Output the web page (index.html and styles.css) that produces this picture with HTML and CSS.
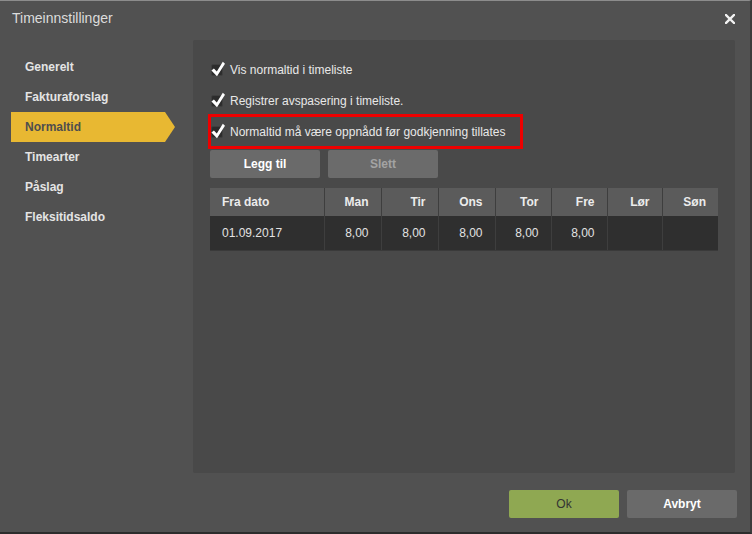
FILE: index.html
```html
<!DOCTYPE html>
<html lang="no">
<head>
<meta charset="utf-8">
<title>Timeinnstillinger</title>
<link rel="stylesheet" href="styles.css">
</head>
<body>
<div class="dialog">
  <div class="header">
    <span class="title">Timeinnstillinger</span>
    <span class="close">
      <svg width="10" height="10" viewBox="0 0 10 10"><path d="M1 1 L9 9 M9 1 L1 9" stroke="#f2f2f2" stroke-width="2.4" stroke-linecap="square"/></svg>
    </span>
  </div>
  <div class="main">
    <nav class="sidebar">
      <div class="nav-item">Generelt</div>
      <div class="nav-item">Fakturaforslag</div>
      <div class="nav-item active">Normaltid</div>
      <div class="nav-item">Timearter</div>
      <div class="nav-item">Påslag</div>
      <div class="nav-item">Fleksitidsaldo</div>
    </nav>
    <section class="panel">
      <div class="check-row">
        <span class="cb"><svg class="tick" width="14" height="16" viewBox="0 0 14 16"><path d="M0.4 9.6 L2.9 7.4 L5.8 10.4 L11.8 0.8 L14 2.7 L6 15.2 Z" fill="#fff"/></svg></span>
        <span class="label">Vis normaltid i timeliste</span>
      </div>
      <div class="check-row">
        <span class="cb"><svg class="tick" width="14" height="16" viewBox="0 0 14 16"><path d="M0.4 9.6 L2.9 7.4 L5.8 10.4 L11.8 0.8 L14 2.7 L6 15.2 Z" fill="#fff"/></svg></span>
        <span class="label">Registrer avspasering i timeliste.</span>
      </div>
      <div class="check-row highlight">
        <span class="cb"><svg class="tick" width="14" height="16" viewBox="0 0 14 16"><path d="M0.4 9.6 L2.9 7.4 L5.8 10.4 L11.8 0.8 L14 2.7 L6 15.2 Z" fill="#fff"/></svg></span>
        <span class="label">Normaltid må være oppnådd før godkjenning tillates</span>
      </div>
      <div class="actions">
        <button class="btn">Legg til</button>
        <button class="btn disabled">Slett</button>
      </div>
      <table class="grid">
        <thead>
          <tr>
            <th class="date">Fra dato</th>
            <th>Man</th><th>Tir</th><th>Ons</th><th>Tor</th><th>Fre</th><th>Lør</th><th>Søn</th>
          </tr>
        </thead>
        <tbody>
          <tr>
            <td class="date">01.09.2017</td>
            <td>8,00</td><td>8,00</td><td>8,00</td><td>8,00</td><td>8,00</td><td></td><td></td>
          </tr>
        </tbody>
      </table>
    </section>
  </div>
  <div class="footer">
    <button class="btn ok">Ok</button>
    <button class="btn">Avbryt</button>
  </div>
</div>
</body>
</html>
```

FILE: styles.css
```css
* { box-sizing: border-box; }

html, body {
  margin: 0;
  padding: 0;
  background: #3a3a3a;
}

body {
  font-family: "Liberation Sans", Arial, sans-serif;
  font-size: 12px;
  color: #e6e6e6;
}

.dialog {
  width: 752px;
  height: 534px;
  background: #515151;
  border-top: 1px solid #8c8c8c;
  border-right: 2px solid #3c3c3c;
  border-bottom: 2px solid #2c2c2c;
  border-top-right-radius: 3px;
  display: flex;
  flex-direction: column;
}

.header {
  height: 39px;
  display: flex;
  align-items: flex-start;
  justify-content: space-between;
}

.title {
  margin: 10px 0 0 12px;
  font-size: 14px;
  line-height: 14px;
  color: #dcdcdc;
}

.close {
  margin: 13px 15px 0 0;
  width: 10px;
  height: 10px;
  display: block;
}
.close svg { display: block; }

.main {
  display: flex;
  height: 433px;
}

.sidebar {
  width: 193px;
  flex: none;
  padding: 12px 0 0 11px;
}

.nav-item {
  width: 164px;
  height: 30px;
  line-height: 30px;
  padding-left: 14px;
  font-weight: bold;
  font-size: 12px;
  color: #e4e4e4;
}

.nav-item.active {
  background: #e8b832;
  color: #4e4e4e;
  clip-path: polygon(0 0, calc(100% - 10px) 0, 100% 50%, calc(100% - 10px) 100%, 0 100%);
}

.panel {
  width: 542px;
  flex: none;
  background: #494949;
  border-radius: 2px;
  padding: 14px 0 0 17px;
}

.check-row {
  display: flex;
  align-items: center;
  height: 31px;
  padding-left: 1px;
}

.check-row.highlight {
  width: 315px;
  height: 35px;
  margin-left: -2px;
  margin-top: -2px;
  padding-left: 0;
  border: 3px solid #ee0000;
}

.cb {
  position: relative;
  width: 12px;
  height: 12px;
  flex: none;
  background: #2c2c2c;
  border: 1px solid #3f3f3f;
  border-radius: 2px;
  margin-right: 7px;
  margin-top: 1px;
}

.tick {
  position: absolute;
  left: -1px;
  top: -4px;
  display: block;
}

.label {
  font-size: 12px;
  line-height: 14px;
  color: #e8e8e8;
}

.actions {
  display: flex;
  gap: 8px;
  margin-top: 1px;
}

.btn {
  width: 110px;
  height: 28px;
  border: none;
  border-radius: 2px;
  background: #6a6a6a;
  color: #ffffff;
  font-family: "Liberation Sans", Arial, sans-serif;
  font-size: 12px;
  font-weight: bold;
  padding: 0;
}

.btn.disabled {
  background: #6b6b6b;
  color: #a3a3a3;
}

.btn.ok {
  background: #8fa852;
  color: #333333;
  font-weight: normal;
}

.grid {
  margin-top: 10px;
  width: 508px;
  border-collapse: collapse;
  table-layout: fixed;
  font-size: 12px;
}

.grid th, .grid td {
  text-align: right;
  padding: 0 12px 0 0;
  border-left: 1px solid #3e3e3e;
  white-space: nowrap;
}

.grid th:first-child, .grid td:first-child { border-left: none; }

.grid th {
  height: 28px;
  background: #5b5b5b;
  color: #ececec;
  font-weight: bold;
}

.grid td {
  height: 34px;
  background: #2f2f2f;
  color: #e2e2e2;
  border-bottom: 1px solid #3a3a3a;
}

.grid .date {
  text-align: left;
  padding: 0 0 0 12px;
  width: 114px;
}

.grid th:nth-child(2), .grid th:nth-child(3), .grid th:nth-child(4) { width: 57px; }
.grid th:nth-child(5), .grid th:nth-child(6), .grid th:nth-child(8) { width: 56px; }
.grid th:nth-child(7) { width: 55px; }

.footer {
  flex: 1;
  display: flex;
  justify-content: flex-end;
  align-items: flex-start;
  gap: 8px;
  padding: 17px 13px 0 0;
}
```
